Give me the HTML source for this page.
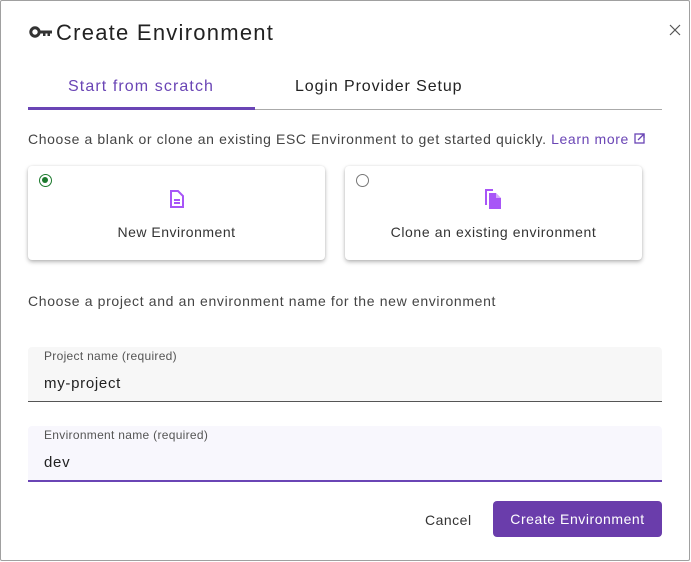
<!DOCTYPE html>
<html><head><style>
*{box-sizing:border-box;margin:0;padding:0}
body{width:691px;height:562px;background:#fff;font-family:"Liberation Sans",sans-serif;color:#333;position:relative;overflow:hidden}
.frame{position:absolute;left:0;top:0;width:690px;height:561px;border:1px solid #a0a0a0;border-radius:2px}
.abs{position:absolute;white-space:nowrap}
.card{position:absolute;top:166px;width:297px;height:94px;background:#fff;border-radius:4px;box-shadow:0 2px 4px rgba(0,0,0,.28),0 0 2px rgba(0,0,0,.08)}
.field{position:absolute;left:28px;width:634px;height:55px;border-radius:4px 4px 0 0}
</style></head><body>
<div class="frame"></div>
<svg class="abs" style="left:29px;top:26px" width="24" height="12" viewBox="0 0 24 12"><circle cx="6" cy="6" r="4.2" fill="none" stroke="#333" stroke-width="3"/><path d="M10 4.5h13v3h-2v2.5h-2.5v-2.5h-2v2.5h-2.5v-2.5H10z" fill="#333"/></svg>
<div class="abs" style="left:56px;top:20px;font-size:22px;color:#222;letter-spacing:1.25px">Create Environment</div>
<svg class="abs" style="left:669px;top:24px" width="12" height="12"><path d="M1 1L11 11M11 1L1 11" stroke="#555" stroke-width="1.2"/></svg>
<div class="abs" style="left:68px;top:78px;font-size:16px;color:#6a45b5;letter-spacing:1.1px">Start from scratch</div>
<div class="abs" style="left:295px;top:78px;font-size:16px;color:#222;letter-spacing:0.9px">Login Provider Setup</div>
<div class="abs" style="left:28px;top:109px;width:634px;height:1px;background:#aaa"></div>
<div class="abs" style="left:28px;top:107px;width:227px;height:3px;background:#6a45b5"></div>
<div class="abs" style="left:28px;top:131px;font-size:14px;color:#444;letter-spacing:0.62px">Choose a blank or clone an existing ESC Environment to get started quickly. <span style="color:#6a45b5">Learn more</span></div>
<svg class="abs" style="left:634px;top:133px" width="11" height="11"><rect x="1" y="1" width="9" height="9" fill="none" stroke="#6a45b5" stroke-width="1.3"/><path d="M4 7L10 1M6 1h4v4" stroke="#6a45b5" stroke-width="1.3" fill="none"/></svg>
<div class="card" style="left:28px"></div>
<div class="card" style="left:345px"></div>
<div class="abs" style="left:39px;top:174px;width:13px;height:13px;border-radius:50%;border:1.5px solid #1d7a2e"><div style="margin:2px;width:6px;height:6px;border-radius:50%;background:#1d7a2e"></div></div>
<div class="abs" style="left:356px;top:174px;width:13px;height:13px;border-radius:50%;border:1.2px solid #777"></div>
<svg class="abs" style="left:168px;top:189px" width="18" height="20" viewBox="0 0 18 20"><path d="M3 2h7l5 5v11H3z" fill="none" stroke="#a855f7" stroke-width="2"/><path d="M6 11h6M6 14h6" stroke="#a855f7" stroke-width="2"/></svg>
<svg class="abs" style="left:482px;top:187px" width="22" height="24" viewBox="0 0 22 24"><path d="M3 2h8v2H5v14H3z" fill="#a855f7"/><path d="M7 6h7l5 5v11H7z" fill="#a855f7"/><path d="M14 6v5h5" fill="#fff" opacity=".5"/></svg>
<div class="abs" style="left:28px;top:224px;width:297px;text-align:center;font-size:14px;color:#333;letter-spacing:0.5px">New Environment</div>
<div class="abs" style="left:345px;top:224px;width:297px;text-align:center;font-size:14px;color:#333;letter-spacing:0.6px">Clone an existing environment</div>
<div class="abs" style="left:28px;top:293px;font-size:14px;color:#444;letter-spacing:0.65px">Choose a project and an environment name for the new environment</div>
<div class="field" style="top:347px;background:#f7f7f7;border-bottom:1px solid #555"></div>
<div class="abs" style="left:44px;top:349px;font-size:12px;color:#555;letter-spacing:0.3px">Project name (required)</div>
<div class="abs" style="left:44px;top:375px;font-size:15px;color:#222;letter-spacing:0.7px">my-project</div>
<div class="field" style="top:426px;background:#f8f7fd;border-bottom:2px solid #6a45b5;height:56px"></div>
<div class="abs" style="left:44px;top:428px;font-size:12px;color:#555;letter-spacing:0.3px">Environment name (required)</div>
<div class="abs" style="left:44px;top:454px;font-size:15px;color:#222;letter-spacing:0.7px">dev</div>
<div class="abs" style="left:425px;top:512px;font-size:14px;color:#333;letter-spacing:0.5px">Cancel</div>
<div class="abs" style="left:493px;top:501px;width:169px;height:36px;background:#6a3dab;border-radius:4px;color:#fff;font-size:14px;text-align:center;line-height:36px;letter-spacing:0.55px">Create Environment</div>
</body></html>
